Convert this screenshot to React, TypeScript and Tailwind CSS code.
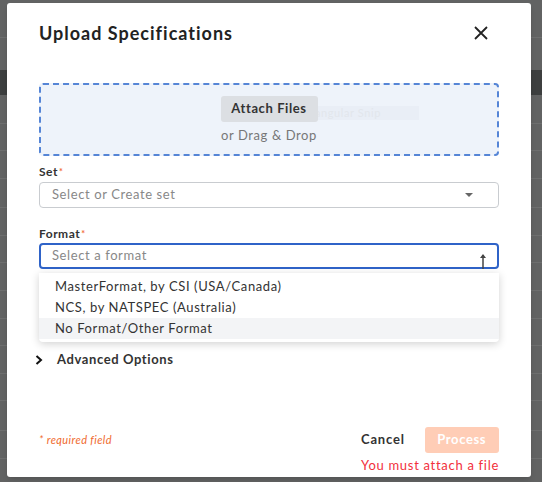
import React from "react";

const formats = [
  "MasterFormat, by CSI (USA/Canada)",
  "NCS, by NATSPEC (Australia)",
  "No Format/Other Format",
];

function Backdrop() {
  // faint table rows of the page behind the overlay
  const rows = [37, 123, 150, 178, 207, 235, 262, 290, 318, 345, 373, 400, 430, 458];
  return (
    <div className="absolute inset-0 bg-[#626363]">
      <div className="absolute left-0 right-0 top-[70px] h-[25px] bg-[#3d3f3f]" />
      {rows.map((y) => (
        <div
          key={y}
          className="absolute left-0 right-0 h-px bg-[#6e6f6f]"
          style={{ top: y }}
        />
      ))}
    </div>
  );
}

function Label({ text }: { text: string }) {
  return (
    <p className="text-[12px] font-bold leading-4 tracking-[0.5px] text-[#333]">
      {text}
      <span className="ml-px align-top text-[9px] text-[#f26b3a]">*</span>
    </p>
  );
}

export default function App() {
  return (
    <div
      className="relative h-[482px] w-[542px] overflow-hidden"
      style={{ fontFamily: "Lato, 'Open Sans', sans-serif" }}
    >
      <Backdrop />
      <div className="absolute left-[7px] top-[3px] flex h-[474px] w-[524px] flex-col rounded-[3px] bg-white px-8 pt-[18px] shadow-md">
        <div className="flex h-6 items-center justify-between">
          <h1 className="text-[18px] font-bold tracking-[1px] text-[#222]">
            Upload Specifications
          </h1>
          <svg width="14" height="14" viewBox="0 0 14 14" className="mr-[11px]">
            <path d="M1 1L13 13M13 1L1 13" stroke="#222" strokeWidth="1.8" />
          </svg>
        </div>

        <div className="relative mt-[38px] flex h-[73px] flex-col items-center justify-center rounded-[4px] border-2 border-dashed border-[#5585d6] bg-[#eef3fa] tracking-[0.6px]">
          <div className="absolute left-[212px] top-[21px] h-[14px] w-[166px] bg-[#e9eef6] pl-[38px] text-[11px] leading-[14px] text-[#e2e6ec]">
            Rectangular Snip
          </div>
          <button
            type="button"
            className="relative h-[26px] w-[97px] rounded-[3px] bg-[#dcdfe3] text-[13px] font-bold tracking-[0.6px] text-[#333]"
          >
            Attach Files
          </button>
          <p className="mt-[5px] text-[13px] leading-4 text-[#777]">or Drag &amp; Drop</p>
        </div>

        <div className="mt-[8px]">
          <Label text="Set" />
          <div className="mt-[2px] flex h-[26px] items-center justify-between rounded-[4px] border border-[#c9ccd0] px-3 text-[13px] tracking-[0.6px] text-[#888]">
            <span>Select or Create set</span>
            <svg width="8" height="4" viewBox="0 0 8 4" className="mr-[13px]">
              <path d="M0 0H8L4 4Z" fill="#666" />
            </svg>
          </div>
        </div>

        <div className="relative mt-[18px]">
          <Label text="Format" />
          <div className="mt-px flex h-[26px] items-center justify-between rounded-[4px] border-2 border-[#2f63c8] pl-[11px] text-[13px] tracking-[0.6px] text-[#888]">
            <span>Select a format</span>
            <svg width="8" height="16" viewBox="0 0 8 16" className="mr-[10px] mt-[10px]">
              <path d="M4 2V16" stroke="#444" strokeWidth="1.5" />
              <path d="M1 5L4 1L7 5Z" fill="#444" />
            </svg>
          </div>
          <ul className="absolute left-0 right-0 top-[47px] z-10 rounded-b-[4px] bg-white py-[3px] shadow-[0_2px_8px_rgba(0,0,0,0.18)]">
            {formats.map((f, i) => (
              <li
                key={f}
                className={
                  "h-[21px] pl-4 text-[13px] leading-[21px] tracking-[0.6px] text-[#333] " +
                  (i === 2 ? "bg-[#f3f4f6]" : "")
                }
              >
                {f}
              </li>
            ))}
          </ul>
        </div>

        <div className="ml-[-4px] mt-[83px] flex h-4 items-center">
          <svg width="8" height="10" viewBox="0 0 8 10">
            <path d="M1.5 1L6 5L1.5 9" fill="none" stroke="#111" strokeWidth="2" />
          </svg>
          <span className="ml-[14px] text-[13px] font-bold tracking-[0.6px] text-[#333]">
            Advanced Options
          </span>
        </div>

        <div className="mt-[59px] flex items-start justify-between">
          <p className="mt-[5px] text-[11px] italic tracking-[0.4px] text-[#f06a2e]">
            * required field
          </p>
          <div className="flex flex-col items-start">
            <div className="flex items-center">
              <button type="button" className="text-[13px] font-bold tracking-[0.8px] text-[#333]">
                Cancel
              </button>
              <button
                type="button"
                className="ml-[20px] h-[26px] w-[74px] rounded-[3px] bg-[#ffcdb6] text-[13px] font-bold tracking-[0.6px] text-white"
              >
                Process
              </button>
            </div>
            <p className="mt-[4px] text-[13px] leading-4 tracking-[0.7px] text-[#f2303c]">
              You must attach a file
            </p>
          </div>
        </div>
      </div>
    </div>
  );
}
